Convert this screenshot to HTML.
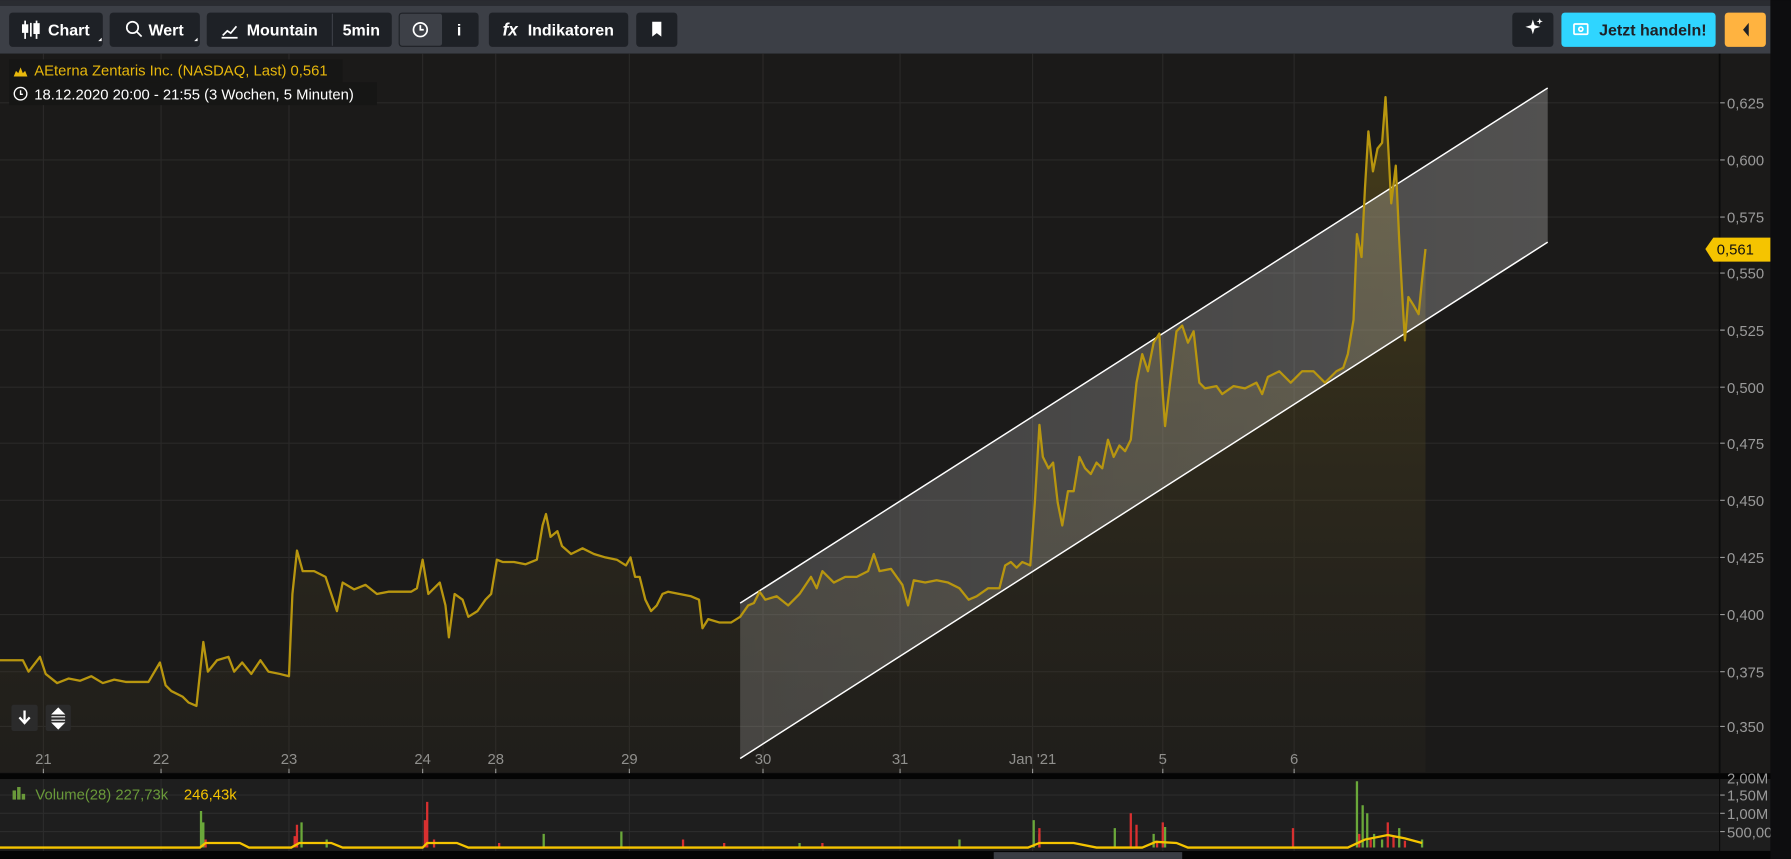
<!DOCTYPE html>
<html><head><meta charset="utf-8"><style>
html,body{margin:0;padding:0;background:#0d0d0f;overflow:hidden}
svg{display:block}
text{font-family:"Liberation Sans",sans-serif}
</style></head><body>
<svg width="1791" height="859" viewBox="0 0 1568 752" xmlns="http://www.w3.org/2000/svg">
<defs>
<linearGradient id="mnt" x1="0" y1="0" x2="0" y2="1">
<stop offset="0" stop-color="#6b5a1a" stop-opacity="0.55"/>
<stop offset="1" stop-color="#3a3526" stop-opacity="0.15"/>
</linearGradient>
<linearGradient id="ch" x1="0" y1="0" x2="1" y2="0">
<stop offset="0" stop-color="#ffffff" stop-opacity="0.17"/>
<stop offset="1" stop-color="#ffffff" stop-opacity="0.24"/>
</linearGradient>
</defs>
<rect width="1568" height="752" fill="#0d0d0f"/>
<!-- toolbar -->
<rect x="0" y="0" width="1550" height="5" fill="#2a2c31"/>
<rect x="0" y="5" width="1550" height="42" fill="#3c3f46"/>
<g fill="#1e2126">
<rect x="8" y="11" width="82" height="30" rx="3"/>
<rect x="96" y="11" width="79" height="30" rx="3"/>
<rect x="181" y="11" width="162" height="30" rx="3"/>
<rect x="349" y="11" width="70" height="30" rx="3"/>
<rect x="428" y="11" width="122" height="30" rx="3"/>
<rect x="557" y="11" width="36" height="30" rx="3"/>
<rect x="1324" y="11" width="36" height="30" rx="3"/>
</g>
<rect x="350" y="12" width="37" height="28" rx="2" fill="#3d4047"/>
<line x1="291" y1="12" x2="291" y2="40" stroke="#3c3f46"/>
<rect x="1367" y="11" width="135" height="30" rx="3" fill="#2fd5ff"/>
<rect x="1510" y="11" width="36" height="30" rx="3" fill="#ffb340"/>
<path d="M1531 20 L1526 26 L1531 32 Z" fill="#1e2126"/>
<g fill="#fff" font-size="14" font-weight="bold">
<text x="42" y="31">Chart</text>
<text x="130" y="31">Wert</text>
<text x="216" y="31">Mountain</text>
<text x="300" y="31">5min</text>
<text x="400" y="31">i</text>
<text x="462" y="31">Indikatoren</text>
</g>
<text x="1400" y="31" font-size="14" font-weight="bold" fill="#1e2126">Jetzt handeln!</text>
<!-- icons -->
<g stroke="#fff" stroke-width="1.5" fill="none">
<path d="M22 18v16M27 20v12M32 18v16"/><rect x="20" y="22" width="4" height="6" fill="#fff"/><rect x="30" y="21" width="4" height="8" fill="#fff"/>
<circle cx="116" cy="24" r="5"/><path d="M120 28l4 4"/>
<path d="M194 33h14M195 31l4-4 3 2 5-6"/>
<circle cx="368" cy="26" r="6"/><path d="M368 22v4h3"/>
<rect x="1378" y="21" width="12" height="9" rx="1"/><circle cx="1384" cy="25.5" r="1.8"/>
</g>
<text x="440" y="31" font-size="15" font-weight="bold" font-style="italic" fill="#fff">fx</text>
<path d="M571 19h8v13l-4-3-4 3z" fill="#fff"/>
<path d="M1342 17l1.5 5 5 1.5-5 1.5-1.5 5-1.5-5-5-1.5 5-1.5z M1348 16l.7 2 2 .7-2 .7-.7 2-.7-2-2-.7 2-.7z" fill="#fff"/>
<path d="M86 36l3-3v3z M170 36l3-3v3z" fill="#fff"/>
<!-- chart area -->
<rect x="0" y="47" width="1550" height="630" fill="#1b1a19"/>
<g stroke="#2a2928" stroke-width="1">
<path d="M0 90H1505M0 140H1505M0 190H1505M0 239H1505M0 289H1505M0 339H1505M0 388H1505M0 438H1505M0 488H1505M0 538H1505M0 588H1505M0 636H1505"/>
<path d="M38 47V677M141 47V677M253 47V677M370 47V677M434 47V677M551 47V677M668 47V677M788 47V677M904 47V677M1018 47V677M1133 47V677"/>
</g>
<line x1="1505.5" y1="47" x2="1505.5" y2="677" stroke="#0a0a0a" stroke-width="1.5"/>
<g fill="#9a9a9a" font-size="13">
<text x="1512" y="95">0,625</text><text x="1512" y="145">0,600</text><text x="1512" y="195">0,575</text><text x="1512" y="244">0,550</text><text x="1512" y="294">0,525</text><text x="1512" y="344">0,500</text><text x="1512" y="393">0,475</text><text x="1512" y="443">0,450</text><text x="1512" y="493">0,425</text><text x="1512" y="543">0,400</text><text x="1512" y="593">0,375</text><text x="1512" y="641">0,350</text>
</g>
<g stroke="#9a9a9a"><path d="M1506 90h4M1506 140h4M1506 190h4M1506 239h4M1506 289h4M1506 339h4M1506 388h4M1506 438h4M1506 488h4M1506 538h4M1506 588h4M1506 636h4"/></g>
<g fill="#a0a0a0" font-size="13" text-anchor="middle">
<text x="38" y="669">21</text><text x="141" y="669">22</text><text x="253" y="669">23</text><text x="370" y="669">24</text><text x="434" y="669">28</text><text x="551" y="669">29</text><text x="668" y="669">30</text><text x="788" y="669">31</text><text x="904" y="669">Jan '21</text><text x="1018" y="669">5</text><text x="1133" y="669">6</text>
</g>
<g stroke="#a0a0a0"><path d="M38 673v4M141 673v4M253 673v4M370 673v4M434 673v4M551 673v4M668 673v4M788 673v4M904 673v4M1018 673v4M1133 673v4"/></g>
<!-- mountain -->
<path id="pl" fill="url(#mnt)" d="M0 578 L20 578 L25 588 L35 575 L40 590 L50 598 L60 594 L70 596 L80 592 L90 598 L100 595 L110 597 L120 597 L130 597 L140 580 L145 600 L150 605 L160 610 L165 615 L172 618 L175 590 L178 562 L182 588 L190 578 L200 575 L205 588 L212 580 L220 590 L228 578 L235 588 L245 590 L253 592 L256 520 L260 482 L265 500 L275 500 L285 505 L290 520 L295 535 L300 510 L310 516 L320 512 L330 520 L340 518 L360 518 L365 515 L370 490 L375 520 L385 510 L390 530 L393 558 L398 520 L405 525 L410 540 L418 535 L425 525 L430 520 L435 490 L440 492 L450 492 L460 494 L470 490 L475 460 L478 450 L482 470 L488 465 L492 478 L500 485 L510 480 L520 485 L530 488 L540 490 L548 495 L552 488 L556 505 L560 505 L565 525 L570 535 L575 530 L580 520 L585 518 L595 520 L605 522 L612 525 L615 550 L620 542 L630 545 L640 545 L648 540 L655 530 L660 528 L665 518 L670 525 L680 522 L690 530 L700 520 L710 505 L715 515 L720 500 L730 510 L740 505 L750 505 L760 500 L765 485 L770 500 L780 498 L790 512 L795 530 L800 508 L810 510 L820 508 L830 510 L840 515 L848 525 L855 522 L865 515 L875 515 L880 495 L885 492 L890 497 L895 492 L902 495 L906 440 L910 372 L913 400 L918 410 L922 405 L926 440 L930 460 L935 430 L940 430 L945 400 L950 410 L955 415 L960 405 L965 410 L970 385 L975 400 L980 390 L985 395 L990 385 L995 335 L1000 310 L1005 325 L1010 300 L1015 292 L1018 345 L1020 373 L1025 330 L1030 290 L1035 285 L1040 300 L1045 290 L1050 335 L1055 340 L1065 338 L1070 345 L1080 338 L1090 340 L1100 335 L1105 345 L1110 330 L1120 325 L1130 335 L1140 325 L1150 325 L1160 335 L1170 325 L1176 322 L1180 310 L1185 280 L1188 205 L1192 225 L1195 165 L1198 115 L1202 150 L1206 130 L1210 125 L1213 85 L1216 140 L1218 178 L1222 145 L1225 210 L1228 265 L1230 298 L1233 260 L1238 268 L1242 275 L1245 245 L1248 218 L1248 676 L0 676 Z"/>
<!-- channel -->
<path d="M648 528 L1355 77 L1355 212 L648 664 Z" fill="url(#ch)"/>
<path d="M648 528 L1355 77 M648 664 L1355 212" stroke="#fff" stroke-width="1.3"/>
<!-- price line -->
<path fill="none" stroke="#b8960f" stroke-width="2" stroke-linejoin="round" d="M0 578 L20 578 L25 588 L35 575 L40 590 L50 598 L60 594 L70 596 L80 592 L90 598 L100 595 L110 597 L120 597 L130 597 L140 580 L145 600 L150 605 L160 610 L165 615 L172 618 L175 590 L178 562 L182 588 L190 578 L200 575 L205 588 L212 580 L220 590 L228 578 L235 588 L245 590 L253 592 L256 520 L260 482 L265 500 L275 500 L285 505 L290 520 L295 535 L300 510 L310 516 L320 512 L330 520 L340 518 L360 518 L365 515 L370 490 L375 520 L385 510 L390 530 L393 558 L398 520 L405 525 L410 540 L418 535 L425 525 L430 520 L435 490 L440 492 L450 492 L460 494 L470 490 L475 460 L478 450 L482 470 L488 465 L492 478 L500 485 L510 480 L520 485 L530 488 L540 490 L548 495 L552 488 L556 505 L560 505 L565 525 L570 535 L575 530 L580 520 L585 518 L595 520 L605 522 L612 525 L615 550 L620 542 L630 545 L640 545 L648 540 L655 530 L660 528 L665 518 L670 525 L680 522 L690 530 L700 520 L710 505 L715 515 L720 500 L730 510 L740 505 L750 505 L760 500 L765 485 L770 500 L780 498 L790 512 L795 530 L800 508 L810 510 L820 508 L830 510 L840 515 L848 525 L855 522 L865 515 L875 515 L880 495 L885 492 L890 497 L895 492 L902 495 L906 440 L910 372 L913 400 L918 410 L922 405 L926 440 L930 460 L935 430 L940 430 L945 400 L950 410 L955 415 L960 405 L965 410 L970 385 L975 400 L980 390 L985 395 L990 385 L995 335 L1000 310 L1005 325 L1010 300 L1015 292 L1018 345 L1020 373 L1025 330 L1030 290 L1035 285 L1040 300 L1045 290 L1050 335 L1055 340 L1065 338 L1070 345 L1080 338 L1090 340 L1100 335 L1105 345 L1110 330 L1120 325 L1130 335 L1140 325 L1150 325 L1160 335 L1170 325 L1176 322 L1180 310 L1185 280 L1188 205 L1192 225 L1195 165 L1198 115 L1202 150 L1206 130 L1210 125 L1213 85 L1216 140 L1218 178 L1222 145 L1225 210 L1228 265 L1230 298 L1233 260 L1238 268 L1242 275 L1245 245 L1248 218"/>
<!-- price tag -->
<path d="M1493 218 L1500 208 L1550 208 L1550 229 L1500 229 Z" fill="#f5c400"/>
<text x="1503" y="223" font-size="13" fill="#111">0,561</text>
<!-- legend -->
<rect x="8" y="52" width="292" height="20" fill="#161615"/>
<rect x="8" y="72" width="322" height="20" fill="#161615"/>
<path d="M12 67 L14 62 L16 64 L18 59 L20 64 L22 62 L24 67 Z" fill="#e8b80c"/>
<text x="30" y="66" font-size="13" fill="#e8b80c">AEterna Zentaris Inc. (NASDAQ, Last)  0,561</text>
<circle cx="18" cy="82" r="5.5" fill="none" stroke="#fff" stroke-width="1.2"/><path d="M18 79v3.5h2" stroke="#fff" stroke-width="1.2" fill="none"/>
<text x="30" y="87" font-size="13" fill="#fff">18.12.2020 20:00 - 21:55  (3 Wochen, 5 Minuten)</text>
<!-- buttons -->
<rect x="10" y="617" width="23" height="23" rx="2" fill="#2b2b2b"/>
<rect x="40" y="617" width="22" height="23" rx="2" fill="#2b2b2b"/>
<path d="M21.5 622v10M17 628l4.5 5 4.5-5" stroke="#fff" stroke-width="2" fill="none"/>
<path d="M46 625l5-5 5 5z M46 633l5 5 5-5z M45 627.5h12M45 630.5h12" fill="#fff" stroke="#fff" stroke-width="1"/>
<!-- separator & volume -->
<rect x="0" y="677" width="1550" height="5" fill="#050505"/>
<rect x="0" y="682" width="1550" height="63" fill="#1e1e1e"/>
<g stroke="#2c2c2c"><path d="M0 696H1505M0 712H1505M0 728H1505"/><path d="M38 682V745M141 682V745M253 682V745M370 682V745M434 682V745M551 682V745M668 682V745M788 682V745M904 682V745M1018 682V745M1133 682V745"/></g>
<line x1="1505.5" y1="682" x2="1505.5" y2="745" stroke="#0a0a0a"/>
<g fill="#9a9a9a" font-size="13"><text x="1512" y="686">2,00M</text><text x="1512" y="701">1,50M</text><text x="1512" y="717">1,00M</text><text x="1512" y="733">500,00k</text></g>
<g stroke="#9a9a9a"><path d="M1506 696h4M1506 712h4M1506 728h4"/></g>
<rect x="11" y="692" width="3" height="8" fill="#6a9a3a"/><rect x="15" y="689" width="3" height="11" fill="#6a9a3a"/><rect x="19" y="695" width="3" height="5" fill="#6a9a3a"/>
<text x="31" y="700" font-size="13" fill="#6a9a3a">Volume(28)  227,73k</text>
<text x="161" y="700" font-size="13" fill="#f5c400">246,43k</text>
<g stroke-width="2">
<path stroke="#6aa83a" d="M176 742V710M178 742V720M264 742V720M286 742V735M476 742V730M544 742V728M905 742V718M910 742V730M976 742V725M1010 742V730M1020 742V724M1188 742V684M1193 742V705M1197 742V712M1203 742V730M1210 742V735M1225 742V725M1245 742V735M840 742V735M700 742V738"/>
<path stroke="#d83030" d="M180 742V735M258 742V732M260 742V722M372 742V718M374 742V702M380 742V735M437 742V738M598 742V735M634 742V738M720 742V738M910 742V725M990 742V712M995 742V722M1013 742V736M1018 742V720M1132 742V725M1190 742V730M1200 742V735M1215 742V720M1220 742V732M1230 742V736"/>
</g>
<path d="M0 742 L175 742 L180 738 L210 738 L218 742 L255 742 L262 738 L290 738 L300 742 L370 742 L374 738 L400 738 L410 742 L900 742 L910 738 L940 738 L960 742 L1000 742 L1012 737 L1030 738 L1040 742 L1180 742 L1195 735 L1215 731 L1230 734 L1245 738" fill="none" stroke="#f5c400" stroke-width="2"/>
<rect x="0" y="745" width="1550" height="7" fill="#050505"/>
<rect x="870" y="746" width="165" height="6" fill="#3a3d44"/>
<rect x="1550" y="0" width="18" height="752" fill="#0d0d0f"/>
</svg>
</body></html>
